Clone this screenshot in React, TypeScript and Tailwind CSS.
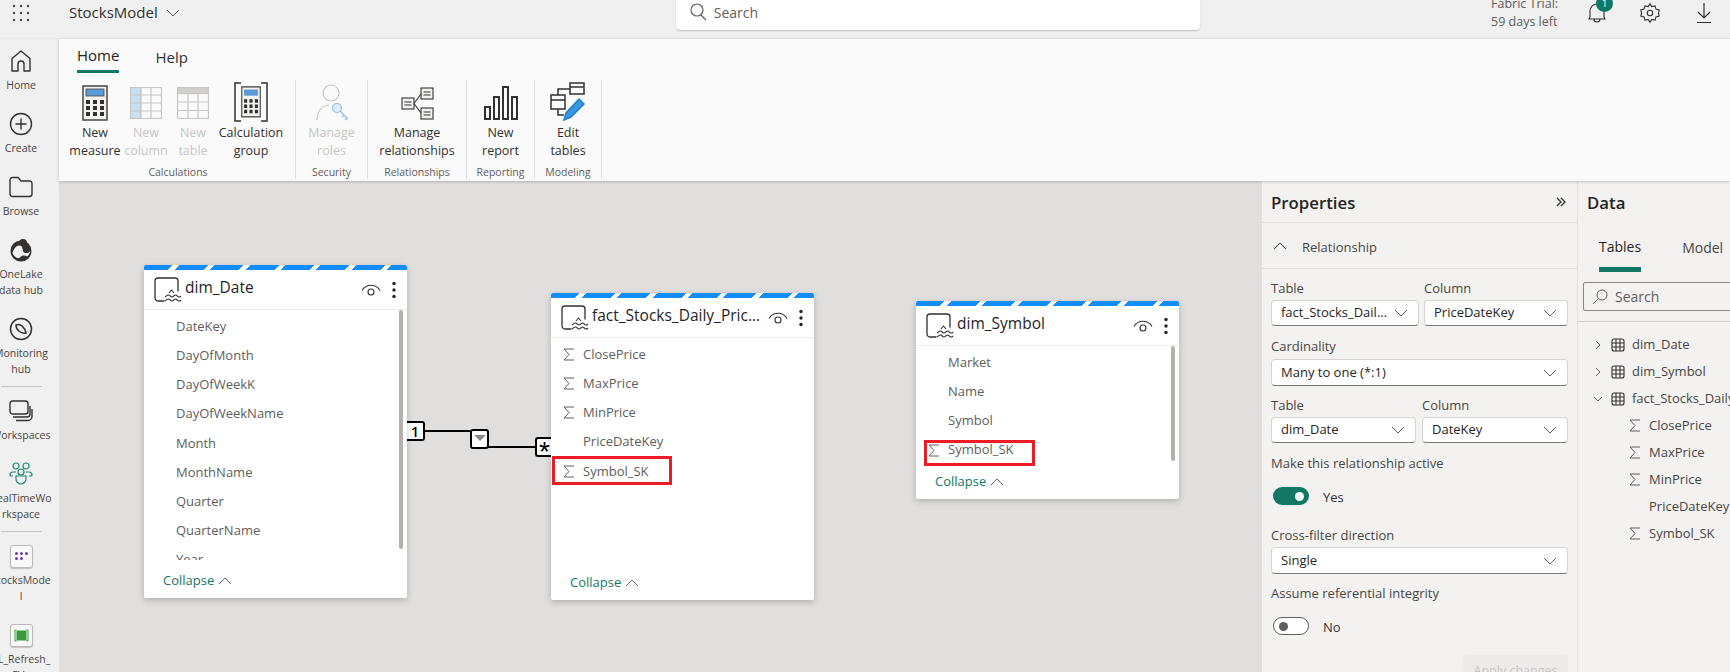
import React from "react";

const Sigma = ({ className = "" }: { className?: string }) => (
  <svg viewBox="0 0 12 13" className={`w-[12px] h-[13px] ${className}`} fill="none" stroke="#605e5c" strokeWidth="1">
    <path d="M11 1H1l5 5.5L1 12h10" />
  </svg>
);

const Chevron = ({ className = "" }: { className?: string }) => (
  <svg viewBox="0 0 14 8" className={`w-[14px] h-[8px] ${className}`} fill="none" stroke="#605e5c" strokeWidth="1">
    <path d="M1 1l6 6 6-6" />
  </svg>
);

const ChevronUp = () => (
  <svg viewBox="0 0 14 8" className="w-[14px] h-[8px] ml-[4px]" fill="none" stroke="#6b6a68" strokeWidth="1">
    <path d="M1 7l6-6 6 6" />
  </svg>
);

const TableIcon = () => (
  <svg viewBox="0 0 28 25" className="w-[28px] h-[25px] shrink-0" fill="none" stroke="#323130" strokeWidth="1.300">
    <path d="M10 24H4a3 3 0 0 1-3-3V4a3 3 0 0 1 3-3h17a3 3 0 0 1 3 3v10" strokeLinecap="round" />
    <path d="M11 20c1.500-1 2-2 3.500-2s2 2 3.500 2 2-2 3.500-2 2 2 3.500 2 1.500-.5 2-1" strokeWidth="1.100" />
    <path d="M11 24c1.500-1 2-2 3.500-2s2 2 3.500 2 2-2 3.500-2 2 2 3.500 2 1.500-.5 2-1" strokeWidth="1.100" />
    <path d="M15 16l2.500-3 2.500 3" strokeWidth="1.100" />
  </svg>
);

const Eye = () => (
  <svg viewBox="0 0 20 14" className="w-[20px] h-[14px]" fill="none" stroke="#323130" strokeWidth="1.100">
    <path d="M1 7.500C5 .5 15 .5 19 7.500" />
    <circle cx="10" cy="9" r="3" />
  </svg>
);

const Dots = () => (
  <svg viewBox="0 0 8 18" className="w-[8px] h-[18px]" fill="#252423">
    <circle cx="4" cy="2.500" r="1.700" />
    <circle cx="4" cy="9" r="1.700" />
    <circle cx="4" cy="15.500" r="1.700" />
  </svg>
);

type Field = { name: string; sigma?: boolean };

const TableCard = ({
  pos,
  title,
  fields,
  scroll,
  children,
}: {
  pos: string;
  title: string;
  fields: Field[];
  scroll?: string;
  children?: React.ReactNode;
}) => (
  <div className={`absolute ${pos} w-[263px] flex flex-col bg-white rounded-[2px] shadow-[0_2px_6px_rgba(0,0,0,0.22)]`}>
    <div className="h-[5px] rounded-t-[2px] bg-[repeating-linear-gradient(135deg,#118dff_0px,#118dff_20.500px,#ffffff_20.500px,#ffffff_25px)]" />
    <div className="h-[40px] flex items-center pl-[10px] pr-[9px] border-b border-[#edebe9]">
      <TableIcon />
      <div className="flex-1 ml-[3px] pb-[4px] text-[15.500px] font-medium text-[#252423] whitespace-nowrap">{title}</div>
      <div className="mr-[9px]">
        <Eye />
      </div>
      <Dots />
    </div>
    <div className="relative flex-1 min-h-0 overflow-hidden pt-[2px]">
      {fields.map((f) => (
        <div key={f.name} className="h-[29.2px] flex items-center text-[13px] text-[#605e5c] relative pl-[32px]">
          {f.sigma && <Sigma className="absolute left-[12px]" />}
          {f.name}
        </div>
      ))}
      {scroll && <div className={`absolute left-[255px] top-0 w-[4px] rounded-full bg-[#b3b0ad] ${scroll}`} />}
    </div>
    <div className="h-[38px] shrink-0 flex items-center pt-[4px] pl-[19px] text-[13px] text-[#117865]">
      Collapse
      <ChevronUp />
    </div>
    {children}
  </div>
);

const Select = ({ value, className = "" }: { value: string; className?: string }) => (
  <div
    className={`flex items-center justify-between bg-white rounded-[4px] border border-[#d6d4d2] border-b-[#7a7876] pl-[9px] pr-[10px] text-[13px] text-[#252423] ${className}`}
  >
    <span className="whitespace-nowrap">{value}</span>
    <Chevron />
  </div>
);

const Label = ({ children, className = "" }: { children: React.ReactNode; className?: string }) => (
  <div className={`h-[18px] flex items-center pt-[2px] text-[13px] text-[#484644] whitespace-nowrap ${className}`}>{children}</div>
);

const RibbonButton = ({
  width,
  icon,
  lines,
  off,
}: {
  width: string;
  icon: React.ReactNode;
  lines: string[];
  off?: boolean;
}) => (
  <div className={`${width} flex flex-col items-center`}>
    <div className="h-[36px] mt-[5px] flex items-center justify-center">{icon}</div>
    <div className={`mt-[3px] text-[12.500px] leading-[18px] text-center whitespace-nowrap ${off ? "text-[#c8c6c4]" : "text-[#323130]"}`}>
      {lines[0]}
      <br />
      {lines[1]}
    </div>
  </div>
);

const RibbonGroup = ({
  width,
  label,
  children,
  className = "",
}: {
  width: string;
  label: string;
  children: React.ReactNode;
  className?: string;
}) => (
  <div className={`${width} h-[99px] flex flex-col border-r border-[#e1dfdd] ${className}`}>
    <div className="flex justify-center h-[85px]">{children}</div>
    <div className="text-[10.500px] leading-[14px] text-center text-[#605e5c] whitespace-nowrap">{label}</div>
  </div>
);

const SideItem = ({ icon, lines }: { icon: React.ReactNode; lines: string[] }) => (
  <div className="w-[60px] -ml-[9px] mb-[19px] flex flex-col items-center shrink-0">
    <div className="h-[24px] flex items-center justify-center">{icon}</div>
    <div className="mt-[4px] text-[10.500px] leading-[16px] text-center text-[#484644] whitespace-nowrap">
      {lines.map((l) => (
        <div key={l}>{l}</div>
      ))}
    </div>
  </div>
);

const SideDivider = () => <div className="w-[41px] ml-[1px] h-px bg-[#c8c6c4] -mt-[10px] mb-[12px] shrink-0" />;

const Toggle = ({ on, text }: { on: boolean; text: string }) => (
  <div className="mt-[15px] flex items-center h-[18px] pl-[2px]">
    {on ? (
      <div className="w-[36px] h-[18px] rounded-full bg-[#117865] flex items-center justify-end pr-[5px]">
        <div className="w-[9px] h-[9px] rounded-full bg-white" />
      </div>
    ) : (
      <div className="w-[36px] h-[18px] rounded-full border border-[#605e5c] bg-white flex items-center pl-[5px]">
        <div className="w-[9px] h-[9px] rounded-full bg-[#605e5c]" />
      </div>
    )}
    <span className="ml-[14px] pt-[3px] text-[13px] text-[#323130]">{text}</span>
  </div>
);

const Calculator = ({ w = 26, h = 36 }: { w?: number; h?: number }) => (
  <svg width={w} height={h} viewBox="0 0 26 36" fill="none">
    <rect x="1" y="1" width="24" height="34" fill="#f3f2f1" stroke="#484644" strokeWidth="1.500" />
    <rect x="4" y="4" width="18" height="7" fill="#5b9bd5" stroke="#484644" strokeWidth="0.800" />
    {[15, 21, 27].map((y) =>
      [4, 11, 18].map((x) => <rect key={`${x}-${y}`} x={x} y={y} width="4" height="4" fill="#323130" />)
    )}
  </svg>
);

const GridOff = ({ head }: { head?: boolean }) => (
  <svg width="32" height="32" viewBox="0 0 32 32" fill="none" stroke="#c8c6c4" strokeWidth="1.200">
    {head ? <rect x="0.500" y="0.500" width="31" height="6" fill="#d2d0ce" /> : <rect x="0.500" y="0.500" width="10" height="31" fill="#c7e0f4" />}
    <rect x="0.500" y="0.500" width="31" height="31" />
    <path d={head ? "M.5 6.500h31M.5 15h31M.5 23.500h31M11 6.500v25M21 6.500v25" : "M.5 8h31M.5 16h31M.5 24h31M11 .5v31M21 .5v31"} />
  </svg>
);

const sigmaFields = (names: string[]) => names.map((name) => ({ name, sigma: name !== "PriceDateKey" && name !== "Market" && name !== "Name" && name !== "Symbol" }));

export default function App() {
  return (
    <div className="relative w-[1730px] h-[672px] overflow-hidden flex flex-col bg-[#f0f0f0] font-['Open_Sans',sans-serif] text-[#252423]">
      {/* top bar */}
      <div className="h-[39px] shrink-0 flex items-center pb-[13px] relative border-b border-[#e8e8e8]">
        <svg width="18" height="18" viewBox="0 0 18 18" fill="#484644" className="ml-[12px]">
          {[2, 9, 16].map((y) => [2, 9, 16].map((x) => <circle key={`${x}${y}`} cx={x} cy={y} r="1.200" />))}
        </svg>
        <span className="ml-[39px] text-[15px] text-[#323130]">StocksModel</span>
        <Chevron className="ml-[8px]" />
        <div className="ml-[496px] w-[524px] h-[36px] shrink-0 bg-white rounded-[4px] border-b border-[#c8c6c4] flex items-center pl-[13px] shadow-[0_0_2px_rgba(0,0,0,0.12)]">
          <svg width="18" height="18" viewBox="0 0 18 18" fill="none" stroke="#605e5c" strokeWidth="1.200">
            <circle cx="8" cy="7" r="6" />
            <path d="M12 12l5 5" />
          </svg>
          <span className="ml-[7px] text-[14px] text-[#605e5c]">Search</span>
        </div>
        <div className="absolute left-[1491px] top-[-5px] text-[12.500px] leading-[18px] text-[#605e5c]">
          Fabric Trial:
          <br />
          59 days left
        </div>
        <div className="absolute left-[1587px] top-[2px]">
          <svg width="20" height="22" viewBox="0 0 20 22" fill="none" stroke="#323130" strokeWidth="1.100">
            <path d="M3 15V9a7 7 0 0 1 14 0v6l1 2H2zM7 17a3 3 0 0 0 6 0" />
          </svg>
          <div className="absolute -top-[7px] left-[9px] w-[17px] h-[17px] rounded-full bg-[#117865] text-white text-[10px] flex items-center justify-center">1</div>
        </div>
        <svg className="absolute left-[1639px] top-[2px]" width="22" height="22" viewBox="0 0 24 24" fill="none" stroke="#323130" strokeWidth="1.200">
          <circle cx="12" cy="12" r="3" />
          <path d="M12 2l2 3 3.500-.8 1 3.500 3.500 1-.8 3.300.8 3.300-3.500 1-1 3.500-3.500-.8-2 3-2-3-3.500.8-1-3.500-3.500-1 .8-3.300-.8-3.300 3.500-1 1-3.500 3.500.8z" />
        </svg>
        <svg className="absolute left-[1695px] top-[2px]" width="18" height="22" viewBox="0 0 18 22" fill="none" stroke="#323130" strokeWidth="1.200">
          <path d="M9 1v15M3 10l6 6 6-6M2 20.500h14" />
        </svg>
      </div>

      <div className="flex flex-1 min-h-0">
        {/* left nav */}
        <div className="w-[59px] shrink-0 flex flex-col pt-[10px] bg-[#f0f0f0]">
          <SideItem
            lines={["Home"]}
            icon={
              <svg width="22" height="24" viewBox="0 0 22 24" fill="none" stroke="#323130" strokeWidth="1.400">
                <path d="M2 22V9.500L11 2l9 7.500V22h-6v-7a3 3 0 0 0-6 0v7z" strokeLinejoin="round" />
              </svg>
            }
          />
          <SideItem
            lines={["Create"]}
            icon={
              <svg width="24" height="24" viewBox="0 0 24 24" fill="none" stroke="#323130" strokeWidth="1.400">
                <circle cx="12" cy="12" r="10.500" />
                <path d="M12 6.500v11M6.500 12h11" />
              </svg>
            }
          />
          <SideItem
            lines={["Browse"]}
            icon={
              <svg width="24" height="22" viewBox="0 0 24 22" fill="none" stroke="#323130" strokeWidth="1.400">
                <path d="M1 4a2.500 2.500 0 0 1 2.500-2.500H9L12 5h9a2.500 2.500 0 0 1 2 2.500V18a2.500 2.500 0 0 1-2.500 2.500h-17A2.500 2.500 0 0 1 1 18z" />
              </svg>
            }
          />
          <SideItem
            lines={["OneLake", "data hub"]}
            icon={
              <svg width="24" height="24" viewBox="0 0 24 24">
                <circle cx="12" cy="13" r="10.500" fill="#323130" />
                <circle cx="14" cy="5" r="4" fill="#323130" />
                <path d="M3.500 15c1.500-5 4-8 7.500-7.500 3.500.8 2 6 4.500 7.200 2.300 1 4.500 0 6-1.700-.8 2.800-2 4.500-3.500 5.500-2-1.500-5-1.500-7 1-1 .6-2 .8-3 .5-2-1-3.800-2.700-4.500-5z" fill="#f0f0f0" />
              </svg>
            }
          />
          <SideItem
            lines={["Monitoring", "hub"]}
            icon={
              <svg width="24" height="24" viewBox="0 0 24 24" fill="none" stroke="#323130" strokeWidth="1.500">
                <circle cx="12" cy="12" r="10.500" />
                <path d="M7 8c5-2 9 3 10 8-5 1-10-3-10-8z" />
              </svg>
            }
          />
          <SideDivider />
          <SideItem
            lines={["Workspaces"]}
            icon={
              <svg width="24" height="22" viewBox="0 0 24 22" fill="none" stroke="#323130" strokeWidth="1.400">
                <rect x="1" y="1" width="18" height="13" rx="2.500" />
                <path d="M4 17h14a3 3 0 0 0 3-3V6M7 20.500h12a4 4 0 0 0 4-4V9" />
              </svg>
            }
          />
          <SideItem
            lines={["RealTimeWo", "rkspace"]}
            icon={
              <svg width="24" height="24" viewBox="0 0 24 24" fill="none" stroke="#1f8a75" strokeWidth="1.200">
                <circle cx="7" cy="4" r="3" />
                <circle cx="17" cy="4" r="3" />
                <circle cx="12" cy="10" r="3" />
                <path d="M7 14h10v3a5 5 0 0 1-10 0zM4 14H2c-1 0-1-1-1-1 0-2 1-3 3-3h3M20 14h2c1 0 1-1 1-1 0-2-1-3-3-3h-3" />
              </svg>
            }
          />
          <SideDivider />
          <SideItem
            lines={["StocksMode", "l"]}
            icon={
              <div className="w-[23px] h-[23px] rounded-[3px] border border-[#bdbbb9] bg-[#f8f8f8] grid grid-cols-3 gap-[2px] px-[4px] py-[6px] content-start shadow-[0_1px_1px_rgba(0,0,0,0.2)]">
                {[0, 1, 2, 3, 4].map((i) => (
                  <div key={i} className="w-[3px] h-[3px] rounded-full bg-[#6b3fb5]" />
                ))}
              </div>
            }
          />
          <SideItem
            lines={["PL_Refresh_", "EV.."]}
            icon={
              <div className="w-[23px] h-[23px] rounded-[3px] border border-[#bdbbb9] bg-[#f8f8f8] flex items-center justify-center shadow-[0_1px_1px_rgba(0,0,0,0.2)]">
                <svg width="15" height="13" viewBox="0 0 15 13" fill="none" stroke="#3a9a3f" strokeWidth="1">
                  <rect x="3" y="2" width="9" height="9" fill="#3a9a3f" />
                  <path d="M2.500 1H1v11h1.500M12.500 1H14v11h-1.500" />
                </svg>
              </div>
            }
          />
        </div>

        <div className="flex-1 min-w-0 flex flex-col">
          {/* ribbon */}
          <div className="relative z-10 h-[142px] shrink-0 bg-[#fafafa] pl-[10px] shadow-[0_1px_3px_rgba(0,0,0,0.2)]">
            <div className="h-[36px] flex items-start pl-[8px]">
              <div className="h-[34px] pt-[2px] flex items-center border-b-[3px] border-[#117865] text-[15px] font-medium text-[#252423]">Home</div>
              <div className="h-[34px] pt-[2px] flex items-center ml-[36px] text-[15px] text-[#323130]">Help</div>
            </div>
            <div className="flex mt-[5px]">
              <RibbonGroup width="w-[227px]" label="Calculations" className="pr-[8px]">
                <RibbonButton width="w-[52px]" lines={["New", "measure"]} icon={<Calculator />} />
                <RibbonButton width="w-[50px]" off lines={["New", "column"]} icon={<GridOff />} />
                <RibbonButton width="w-[44px]" off lines={["New", "table"]} icon={<GridOff head />} />
                <RibbonButton
                  width="w-[72px]"
                  lines={["Calculation", "group"]}
                  icon={
                    <svg width="34" height="40" viewBox="0 0 34 40" fill="none" className="-mt-[3px]">
                      <path d="M7 1H1v38h6M27 1h6v38h-6" stroke="#323130" strokeWidth="1.500" />
                      <g transform="translate(7 4) scale(0.77 0.88)">
                        <rect x="1" y="1" width="24" height="34" fill="#f3f2f1" stroke="#484644" strokeWidth="1.500" />
                        <rect x="4" y="4" width="18" height="7" fill="#5b9bd5" />
                        {[15, 21, 27].map((y) =>
                          [4, 11, 18].map((x) => <rect key={`${x}-${y}`} x={x} y={y} width="4" height="4" fill="#323130" />)
                        )}
                      </g>
                    </svg>
                  }
                />
              </RibbonGroup>
              <RibbonGroup width="w-[72px]" label="Security">
                <RibbonButton
                  width="w-[72px]"
                  off
                  lines={["Manage", "roles"]}
                  icon={
                    <svg width="34" height="38" viewBox="0 0 34 38" fill="none" stroke="#c8c6c4" strokeWidth="1.200" className="ml-[3px]">
                      <circle cx="15" cy="9" r="8" />
                      <path d="M1 36c0-9 5-14 12-15" />
                      <circle cx="21" cy="24" r="4.500" stroke="#8fc0e0" fill="#deecf9" />
                      <path d="M24 27l8 8M28 31l-2 2M31 34l-2 2" stroke="#8fc0e0" />
                    </svg>
                  }
                />
              </RibbonGroup>
              <RibbonGroup width="w-[99px]" label="Relationships">
                <RibbonButton
                  width="w-[99px]"
                  lines={["Manage", "relationships"]}
                  icon={
                    <svg width="33" height="33" viewBox="0 0 33 33" fill="none" stroke="#323130" strokeWidth="1.100">
                      <rect x="1" y="11" width="12" height="11" fill="#f3f2f1" />
                      <rect x="20" y="1" width="12" height="11" fill="#f3f2f1" />
                      <rect x="20" y="21" width="12" height="11" fill="#f3f2f1" />
                      <path d="M3.500 15h7M3.500 18h7M22.500 5h7M22.500 8h7M22.500 25h7M22.500 28h7M13 16.500L20 7M13 16.500L20 26" />
                    </svg>
                  }
                />
              </RibbonGroup>
              <RibbonGroup width="w-[68px]" label="Reporting">
                <RibbonButton
                  width="w-[68px]"
                  lines={["New", "report"]}
                  icon={
                    <svg width="34" height="34" viewBox="0 0 34 34" fill="none" stroke="#323130" strokeWidth="2">
                      <rect x="1" y="21" width="5" height="12" />
                      <rect x="10" y="11" width="5" height="22" />
                      <rect x="19" y="1" width="5" height="32" />
                      <rect x="28" y="11" width="5" height="22" />
                    </svg>
                  }
                />
              </RibbonGroup>
              <RibbonGroup width="w-[67px]" label="Modeling">
                <RibbonButton
                  width="w-[67px]"
                  lines={["Edit", "tables"]}
                  icon={
                    <svg width="37" height="40" viewBox="0 0 37 40" fill="none" stroke="#323130" strokeWidth="1.500" className="-mt-[3px]">
                      <rect x="1" y="13" width="14" height="14" />
                      <path d="M1 18h14" />
                      <rect x="20" y="1" width="14" height="11" />
                      <path d="M20 5h14M8 13V7h12M8 27v6h6" />
                      <path d="M14 38l2-7 13-14 5 5-13 13z" fill="#3a96dd" stroke="#1f7fc9" />
                    </svg>
                  }
                />
              </RibbonGroup>
            </div>
          </div>

          <div className="flex flex-1 min-h-0">
            {/* diagram canvas */}
            <div className="relative flex-1 min-w-0 bg-[#e1dfdd]">
              <svg className="absolute inset-0 w-full h-full" fill="none" stroke="#000000" strokeWidth="2">
                <path d="M366 250h45M429 266h47" />
              </svg>
              <div className="absolute left-[348px] top-[240px] w-[18px] h-[20px] bg-white border-[2.500px] border-l-0 border-black rounded-r-[3px] flex items-center justify-center text-[14px] font-semibold text-black">1</div>
              <div className="absolute left-[411px] top-[248px] w-[19px] h-[20px] bg-white border-[2.500px] border-black rounded-[3px] flex justify-center pt-[4px]">
                <div className="w-0 h-0 border-l-[6px] border-r-[6px] border-t-[6px] border-l-transparent border-r-transparent border-t-[#8a8886]" />
              </div>
              <div className="absolute left-[476px] top-[256px] w-[17px] h-[20px] bg-white border-[2.500px] border-r-0 border-black rounded-l-[3px] flex items-start justify-center text-[28px] leading-[26px] text-black font-['Liberation_Sans',sans-serif]">*</div>

              <TableCard
                pos="left-[85px] top-[84px] h-[333px]"
                title="dim_Date"
                scroll="h-[239px]"
                fields={sigmaFields(["DateKey", "DayOfMonth", "DayOfWeekK", "DayOfWeekName", "Month", "MonthName", "Quarter", "QuarterName", "Year"])
                  .map((f) => ({ name: f.name }))}
              />
              <TableCard
                pos="left-[492px] top-[112px] h-[307px]"
                title="fact_Stocks_Daily_Pric..."
                fields={sigmaFields(["ClosePrice", "MaxPrice", "MinPrice", "PriceDateKey", "Symbol_SK"])}
              >
                <div className="absolute left-[1px] top-[163px] w-[120px] h-[29px] border-[3px] border-[#ed1c24]" />
              </TableCard>
              <TableCard
                pos="left-[857px] top-[120px] h-[198px]"
                title="dim_Symbol"
                scroll="h-[115px]"
                fields={sigmaFields(["Market", "Name", "Symbol", "Symbol_SK"])}
              >
                <div className="absolute left-[8px] top-[139px] w-[111px] h-[26px] border-[3px] border-[#ed1c24]" />
              </TableCard>
            </div>

            {/* properties */}
            <div className="w-[315px] shrink-0 bg-[#f3f2f1] flex flex-col">
              <div className="h-[42px] shrink-0 border-b border-[#e1dfdd] flex items-center justify-between pl-[9px] pr-[11px]">
                <span className="pt-[2px] text-[16.800px] font-semibold text-[#252423]">Properties</span>
                <svg width="10" height="10" viewBox="0 0 10 10" fill="none" stroke="#323130" strokeWidth="1.300">
                  <path d="M1 1l4 4-4 4M5 1l4 4-4 4" />
                </svg>
              </div>
              <div className="h-[46px] shrink-0 border-b border-[#e1dfdd] flex items-center pl-[11px]">
                <svg viewBox="0 0 14 8" className="w-[14px] h-[8px]" fill="none" stroke="#323130" strokeWidth="1">
                  <path d="M1 7l6-6 6 6" />
                </svg>
                <span className="ml-[15px] pt-[5px] text-[13px] text-[#484644]">Relationship</span>
              </div>
              <div className="flex flex-col px-[9px] pt-[10px]">
                <div className="flex gap-[5px]">
                  <div className="w-[148px]">
                    <Label>Table</Label>
                    <Select value="fact_Stocks_Dail..." className="mt-[3px] h-[26px]" />
                  </div>
                  <div className="w-[144px]">
                    <Label>Column</Label>
                    <Select value="PriceDateKey" className="mt-[3px] h-[26px]" />
                  </div>
                </div>
                <Label className="mt-[11px]">Cardinality</Label>
                <Select value="Many to one (*:1)" className="mt-[4px] h-[27px]" />
                <div className="flex gap-[6px] mt-[10px]">
                  <div className="w-[145px]">
                    <Label>Table</Label>
                    <Select value="dim_Date" className="mt-[3px] h-[26px]" />
                  </div>
                  <div className="w-[146px]">
                    <Label>Column</Label>
                    <Select value="DateKey" className="mt-[3px] h-[26px]" />
                  </div>
                </div>
                <Label className="mt-[11px]">Make this relationship active</Label>
                <Toggle on text="Yes" />
                <Label className="mt-[21px]">Cross-filter direction</Label>
                <Select value="Single" className="mt-[3px] h-[27px]" />
                <Label className="mt-[10px]">Assume referential integrity</Label>
                <Toggle on={false} text="No" />
                <div className="self-end mt-[20px] w-[105px] h-[32px] rounded-[4px] bg-[#edebe9] flex items-center justify-center text-[12.500px] text-[#c8c6c4]">Apply changes</div>
              </div>
            </div>

            {/* data pane */}
            <div className="w-[153px] shrink-0 overflow-hidden bg-[#f3f2f1] border-l border-[#e1dfdd] flex flex-col">
              <div className="h-[42px] shrink-0 flex items-center pl-[9px] pt-[2px] text-[16.800px] font-semibold text-[#252423]">Data</div>
              <div className="h-[49px] shrink-0 flex pl-[21px] text-[14px]">
                <div className="h-[49px] flex items-center pt-[2px] border-b-[5px] border-[#117865] font-medium text-[#252423]">Tables</div>
                <div className="h-[49px] flex items-center ml-[41px] text-[#484644] whitespace-nowrap">Model</div>
              </div>
              <div className="mt-[10px] ml-[5px] w-[170px] h-[29px] shrink-0 border border-[#8a8886] rounded-[2px] flex items-center pl-[8px]">
                <svg width="16" height="16" viewBox="0 0 16 16" fill="none" stroke="#605e5c" strokeWidth="1">
                  <circle cx="10" cy="6" r="5" />
                  <path d="M6.500 9.500L1 15" />
                </svg>
                <span className="ml-[7px] text-[14px] text-[#605e5c]">Search</span>
              </div>
              <div className="mt-[10px] h-px bg-[#d2d0ce] shrink-0" />
              <div className="pt-[9px] text-[13px] text-[#484644]">
                {[
                  { name: "dim_Date", open: false },
                  { name: "dim_Symbol", open: false },
                  { name: "fact_Stocks_Daily_Price", open: true },
                ].map((t) => (
                  <div key={t.name} className="relative h-[27px] flex items-center pl-[54px] whitespace-nowrap">
                    <svg viewBox="0 0 10 10" className="absolute left-[15px] w-[10px] h-[10px]" fill="none" stroke="#605e5c" strokeWidth="1">
                      <path d={t.open ? "M1 3l4 4 4-4" : "M3 1l4 4-4 4"} />
                    </svg>
                    <svg viewBox="0 0 14 14" className="absolute left-[33px] w-[14px] h-[14px]" fill="none" stroke="#323130" strokeWidth="1.100">
                      <rect x="1" y="1" width="12" height="12" rx="2" />
                      <path d="M1 5h12M1 9h12M5 1v12M9 1v12" />
                    </svg>
                    {t.name}
                  </div>
                ))}
                {["ClosePrice", "MaxPrice", "MinPrice", "PriceDateKey", "Symbol_SK"].map((n) => (
                  <div key={n} className="relative h-[27px] flex items-center pl-[71px] whitespace-nowrap">
                    {n !== "PriceDateKey" && <Sigma className="absolute left-[51px]" />}
                    {n}
                  </div>
                ))}
              </div>
            </div>
          </div>
        </div>
      </div>
    </div>
  );
}
